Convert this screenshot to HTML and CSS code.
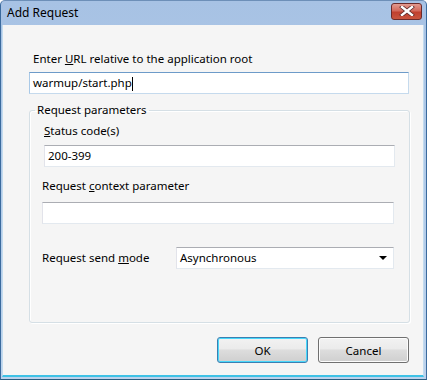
FILE: index.html
```html
<!DOCTYPE html>
<html>
    <head>
        <title>Add Request</title>
        <link rel="stylesheet" href="styles.css">
    </head>
    <body>
        <div class="window">
            <div class="titlebar">
                <span class="title">Add Request</span>
                <div class="close">
                    <svg width="16" height="10" viewBox="0 0 16 10">
                        <path d="M3 1 L13 9 M13 1 L3 9" stroke="#5a2a2a" stroke-width="4" stroke-linecap="square"/>
                        <path d="M3 1 L13 9 M13 1 L3 9" stroke="#ffffff" stroke-width="2.4" stroke-linecap="square"/>
                    </svg>
                </div>
            </div>
            <div class="content">
                <p class="label">Enter <u>U</u>RL relative to the application root</p>
                <div class="input url">warmup/start.php<span class="caret"></span></div>
                <fieldset class="group">
                    <legend>Request parameters</legend>
                    <p class="label"><u>S</u>tatus code(s)</p>
                    <div class="input status">200-399</div>
                    <p class="label ctx">Request <u>c</u>ontext parameter</p>
                    <div class="input ctxinput"></div>
                    <div class="moderow">
                        <span class="label">Request send <u>m</u>ode</span>
                        <div class="input select">
                            <span>Asynchronous</span>
                            <span class="arrow"></span>
                        </div>
                    </div>
                </fieldset>
                <div class="buttons">
                    <button class="btn default">OK</button>
                    <button class="btn">Cancel</button>
                </div>
            </div>
        </div>
    </body>
</html>
```

FILE: styles.css
```css
html, body{
    margin: 0;
    padding: 0;
}
body{
    width: 427px;
    height: 380px;
    overflow: hidden;
    font-family: "Noto Sans", "Open Sans", sans-serif;
    font-size: 11.5px;
    color: #000;
}
.window{
    box-sizing: border-box;
    width: 427px;
    height: 380px;
    display: flex;
    flex-direction: column;
    background: linear-gradient(#a7c2e4, #bcd2ec);
    border-left: 1px solid #3b6b9e;
    border-right: 1px solid #3b6b9e;
    border-top: 1px solid #6d8fb8;
    border-bottom: 1px solid #2a5d80;
    border-radius: 5px 5px 0 0;
}
.titlebar{
    height: 24px;
    display: flex;
    align-items: center;
    justify-content: space-between;
    padding: 0 4px 0 6px;
}
.title{
    font-size: 12px;
    margin-top: -2px;
}
.close{
    width: 29px;
    height: 15px;
    margin-top: -4px;
    border: 1px solid #6b2a2a;
    border-radius: 3px;
    background: linear-gradient(#e29a8f, #d3695b 45%, #c0402f 55%, #c9553f);
    display: flex;
    justify-content: center;
    align-items: center;
}
.content{
    flex: 1;
    margin: 0 2px 2px 1px;
    background: #f5f5f5;
    border-left: 1px solid #c3dcef;
    border-bottom: 2px solid #3ec2e6;
    border-right: 1px solid #c3dcef;
    padding: 0 14px 0 26px;
    display: flex;
    flex-direction: column;
}
.label{
    margin: 0;
    height: 16px;
    line-height: 16px;
}
.content > .label{
    margin-top: 26px;
    padding-left: 4px;
}
.input{
    box-sizing: border-box;
    height: 22px;
    background: #fff;
    border: 1px solid #e3e9ef;
    border-top-color: #abadb3;
    border-left-color: #e2e3ea;
    padding-left: 3px;
    line-height: 20px;
}
.url{
    margin-top: 5px;
    width: 380px;
    border-color: #c5daed;
    border-top-color: #6d9bc9;
    border-left-color: #a9c9e7;
}
.caret{
    display: inline-block;
    width: 1px;
    height: 14px;
    background: #000;
    vertical-align: middle;
}
.group{
    box-sizing: border-box;
    width: 380px;
    height: 220px;
    margin: 9px 0 0 0;
    padding: 6px 14px 0 14px;
    border: 1px solid #d5dfe5;
    border-radius: 3px;
    box-shadow: inset 1px 1px 0 #fff, 1px 1px 0 #fff;
}
.group legend{
    padding: 0 2px;
    margin-left: -9px;
    line-height: 14px;
}
.status{
    margin-top: 6px;
    width: 351px;
}
.ctx{
    margin-top: 11px;
    margin-left: -2px;
}
.ctxinput{
    margin-top: 8px;
    width: 352px;
    margin-left: -2px;
}
.moderow{
    display: flex;
    align-items: center;
    justify-content: space-between;
    margin-top: 23px;
    margin-left: -2px;
    width: 352px;
}
.select{
    width: 218px;
    display: flex;
    justify-content: space-between;
    align-items: center;
    padding-right: 6px;
}
.arrow{
    width: 0;
    height: 0;
    border-left: 4px solid transparent;
    border-right: 4px solid transparent;
    border-top: 4px solid #000;
}
.buttons{
    display: flex;
    justify-content: flex-end;
    gap: 10px;
    margin-top: 14px;
    width: 380px;
}
.btn{
    box-sizing: border-box;
    width: 91px;
    height: 26px;
    font-family: "Noto Sans", "Open Sans", sans-serif;
    font-size: 11.5px;
    color: #000;
    border: 1px solid #707070;
    border-radius: 3px;
    background: linear-gradient(#f2f2f2, #ebebeb 45%, #dddddd 50%, #cfcfcf);
    box-shadow: inset 0 0 0 1px #fcfcfc;
    padding: 0;
}
.btn.default{
    border-color: #3c7fb1;
    box-shadow: inset 0 0 0 1px #48d8fb;
}
```
